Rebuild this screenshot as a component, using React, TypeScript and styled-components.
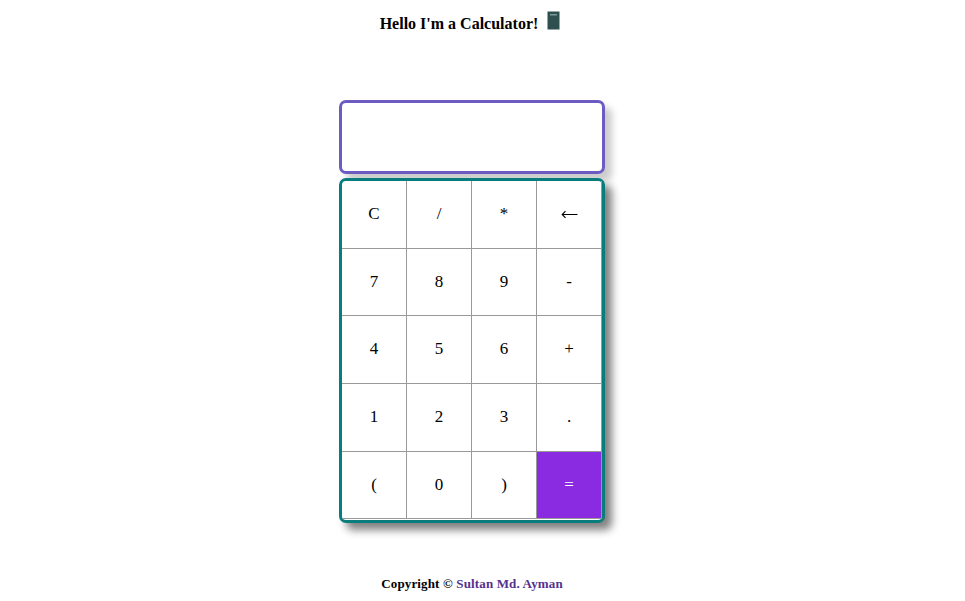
import React from "react";
import styled, { createGlobalStyle } from "styled-components";

const GlobalStyle = createGlobalStyle`
  * { box-sizing: border-box; }
  body {
    margin: 0;
    background: #fff;
    color: #000;
    font-family: "Liberation Serif", "Times New Roman", serif;
  }
`;

const Page = styled.div`
  height: 601px;
  width: 944px;
  display: flex;
  flex-direction: column;
  align-items: center;
  overflow: hidden;
`;

const Title = styled.h1`
  display: flex;
  align-items: flex-start;
  gap: 9px;
  height: 24px;
  margin: 11px 4px 65px 0;
  font-size: 16px;
  line-height: 26px;
  font-weight: bold;
  white-space: nowrap;
  svg { display: block; }
`;

const Display = styled.output`
  display: block;
  flex: none;
  width: 266px;
  height: 74px;
  border: 3px solid #6e5bc2;
  border-radius: 7px;
  background: #fff;
  box-shadow: 7px 7px 7px #ccc;
`;

const Keypad = styled.div`
  flex: none;
  display: grid;
  grid-template-columns: repeat(4, 65px);
  grid-template-rows: 68px 67px 68px 68px 67px;
  width: 266px;
  height: 345px;
  margin-top: 4px;
  border: 3px solid #087d7c;
  border-radius: 7px;
  background: #fff;
  box-shadow: 7px 7px 8px gray;
`;

const Key = styled.button<{ $accent?: boolean }>`
  display: flex;
  align-items: center;
  justify-content: center;
  padding: 0 0 1px;
  border: 0 solid #999;
  border-width: 0 1px 1px 0;
  background: ${(p) => (p.$accent ? "#8a2be2" : "transparent")};
  color: ${(p) => (p.$accent ? "#fff" : "#000")};
  font: 17px "Liberation Serif", "Times New Roman", serif;
`;

const Footer = styled.footer`
  margin-top: 53px;
  font-size: 13px;
  line-height: 16px;
  font-weight: bold;
  letter-spacing: 0.15px;
  white-space: nowrap;
`;

const AuthorLink = styled.a`
  color: #56308c;
  text-decoration: none;
`;

const keys = [
  "C", "/", "*", "←",
  "7", "8", "9", "-",
  "4", "5", "6", "+",
  "1", "2", "3", ".",
  "(", "0", ")", "=",
];

const CalculatorIcon = () => (
  <svg width="13" height="19" viewBox="0 0 13 19" aria-hidden="true">
    <rect x="0.5" y="0.5" width="12" height="18" fill="#2f4f4f" />
    <rect x="3" y="3" width="7" height="1.5" fill="#7d9a98" />
    <path d="M4.5 7v9M6.5 7v9M8.5 7v9" stroke="#285252" strokeWidth="1" />
  </svg>
);

const BackArrow = () => (
  <svg width="17" height="9" viewBox="0 0 17 9" aria-hidden="true">
    <path d="M1 4.5H16.5" stroke="#000" fill="none" />
    <path d="M4.5 1.2L1.2 4.5L4.5 7.8" stroke="#000" strokeWidth="1.1" fill="none" />
  </svg>
);

export default function App() {
  return (
    <>
      <GlobalStyle />
      <Page>
        <Title>
          <span>Hello I'm a Calculator!</span>
          <CalculatorIcon />
        </Title>
        <Display />
        <Keypad>
          {keys.map((k) => (
            <Key key={k} $accent={k === "="} aria-label={k === "←" ? "Backspace" : undefined}>
              {k === "←" ? <BackArrow /> : k}
            </Key>
          ))}
        </Keypad>
        <Footer>
          Copyright © <AuthorLink href="#">Sultan Md. Ayman</AuthorLink>
        </Footer>
      </Page>
    </>
  );
}
